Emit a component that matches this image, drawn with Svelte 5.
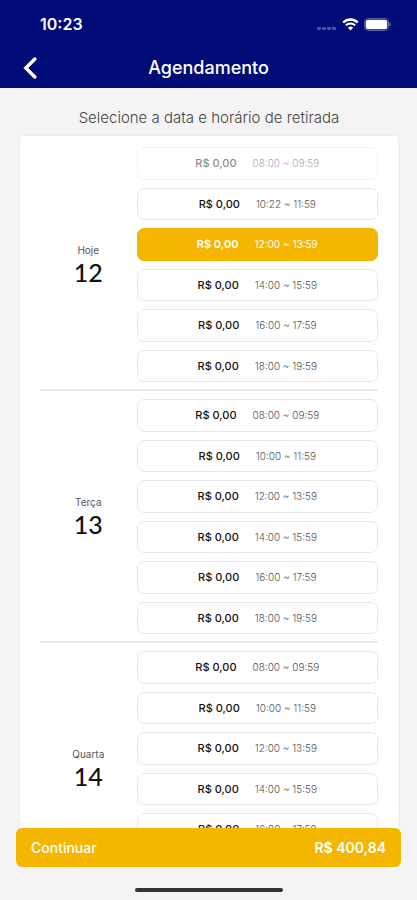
<script lang="ts">
	type Slot = { id: string; price: string; time: string; disabled?: boolean };
	type Day = { label: string; date: string; slots: Slot[] };

	const buildSlots = (date: string, times: string[]): Slot[] =>
		times.map((time) => ({ id: `${date}-${time}`, price: 'R$ 0,00', time }));

	const times = [
		'08:00 ~ 09:59',
		'10:00 ~ 11:59',
		'12:00 ~ 13:59',
		'14:00 ~ 15:59',
		'16:00 ~ 17:59',
		'18:00 ~ 19:59'
	];

	const today = buildSlots('12', [times[0], '10:22 ~ 11:59', ...times.slice(2)]);
	today[0].disabled = true;

	const days: Day[] = [
		{ label: 'Hoje', date: '12', slots: today },
		{ label: 'Terça', date: '13', slots: buildSlots('13', times) },
		{ label: 'Quarta', date: '14', slots: buildSlots('14', times.slice(0, 5)) }
	];

	let selected = $state(today[2].id);
</script>

<div class="screen">
	<header>
		<div class="status">
			<span class="clock">10:23</span>
			<div class="indicators">
				<svg width="20" height="13" viewBox="0 0 20 13" fill="#fff" fill-opacity="0.3" aria-hidden="true">
					<rect x="0" y="9" width="4" height="3" rx="1" />
					<rect x="5" y="9" width="4" height="3" rx="1" />
					<rect x="10" y="9" width="4" height="3" rx="1" />
					<rect x="15" y="9" width="4" height="3" rx="1" />
				</svg>
				<svg width="17" height="13" viewBox="0 0 17 13" fill="none" stroke="#fff" aria-hidden="true">
					<path d="M1.2 4.5a10.4 10.4 0 0 1 14.6 0" stroke-width="2.4" />
					<path d="M3.9 7.3a6.6 6.6 0 0 1 9.2 0" stroke-width="2.1" />
					<path d="M8.5 12.4 5.9 9.7a3.8 3.8 0 0 1 5.2 0Z" fill="#fff" stroke="none" />
				</svg>
				<svg width="27" height="13" viewBox="0 0 27 13" aria-hidden="true">
					<rect x="0.5" y="0.5" width="24" height="12" rx="3.5" fill="none" stroke="#fff" stroke-opacity="0.35" />
					<rect x="1.7" y="1.7" width="21.6" height="9.6" rx="2.4" fill="#fff" />
					<path d="M25.4 4.5c1.6.6 1.6 3.4 0 4Z" fill="#fff" fill-opacity="0.5" />
				</svg>
			</div>
		</div>
		<div class="title-bar">
			<button type="button" class="back" aria-label="Voltar">
				<svg width="14" height="22" viewBox="0 0 14 22" fill="none" stroke="#fff" stroke-width="3.4" aria-hidden="true">
					<path d="M11.8 2 2.8 11l9 9" stroke-linecap="round" />
				</svg>
			</button>
			<h1>Agendamento</h1>
		</div>
	</header>

	<main>
		<p class="hint">Selecione a data e horário de retirada</p>
		<div class="card">
			{#each days as day}
				<section class="day">
					<div class="day-name">
						<span>{day.label}</span>
						<strong>{day.date}</strong>
					</div>
					<div class="slots">
						{#each day.slots as slot}
							<button
								type="button"
								class="slot"
								class:selected={selected === slot.id}
								disabled={slot.disabled}
								aria-pressed={selected === slot.id}
								onclick={() => (selected = slot.id)}
							>
								<span class="price">{slot.price}</span>
								<span class="time">{slot.time}</span>
							</button>
						{/each}
						{#if day.slots.length < times.length}
							<span></span>
						{/if}
					</div>
				</section>
			{/each}
		</div>
	</main>

	<footer>
		<button type="button" class="continue">
			<span>Continuar</span>
			<span class="total">R$ 400,84</span>
		</button>
		<div class="home-bar"></div>
	</footer>
</div>

<style>
	:global(body) {
		background: #f4f4f4;
	}

	button {
		margin: 0;
		border: 0;
		font-family: inherit;
		cursor: pointer;
	}

	.screen {
		display: flex;
		flex-direction: column;
		height: 100vh;
		color: #111;
		font-family: Inter, 'Open Sans', sans-serif;
	}

	header {
		flex: none;
		background: #000c78;
		color: #fff;
	}

	.status {
		display: flex;
		align-items: center;
		justify-content: space-between;
		height: 48px;
		padding: 0 26px 0 40px;
	}

	.clock {
		font-size: 16px;
		font-weight: 600;
	}

	.indicators {
		display: flex;
		align-items: center;
		gap: 5px;
	}

	.title-bar {
		display: grid;
		grid-template-columns: 44px 1fr 44px;
		align-items: center;
		height: 40px;
	}

	.back {
		display: flex;
		justify-content: flex-end;
		padding: 0 7px 0 0;
		background: none;
	}

	h1 {
		margin: 0;
		font-size: 18px;
		font-weight: 500;
		line-height: 22px;
		text-align: center;
	}

	main {
		flex: 1;
		min-height: 0;
		padding: 0 19px 0 20px;
		overflow-y: auto;
		scrollbar-width: none;
	}

	.hint {
		margin: 0;
		padding: 20px 0 8px;
		color: #444;
		font-size: 15px;
		font-weight: 300;
		line-height: 20px;
		text-align: center;
	}

	.card {
		padding: 3px 20px 0;
		border-radius: 4px;
		background: #fff;
		box-shadow: 0 0 4px rgba(0, 0, 0, 0.06);
	}

	.day {
		display: grid;
		grid-template-columns: 2fr 5fr;
		padding: 8px 0 7px;
		border-bottom: 2px solid #ececec;
	}

	.day-name {
		display: flex;
		flex-direction: column;
		align-items: center;
		justify-content: center;
		color: #555;
		font-size: 10px;
		line-height: 14px;
	}

	.day-name strong {
		color: #111;
		font-family: Lato, sans-serif;
		font-size: 25px;
		font-weight: 500;
		line-height: 30px;
	}

	.slots {
		display: grid;
		grid-auto-rows: 1fr;
		gap: 8px;
		min-height: 235px;
	}

	.slot {
		display: flex;
		align-items: center;
		justify-content: center;
		gap: 16px;
		padding: 0;
		border: 1px solid #e9e9e9;
		border-radius: 7px;
		background: #fff;
		color: #111;
		font-size: 11px;
	}

	.price {
		font-weight: 500;
	}

	.time {
		color: #555;
		font-size: 10px;
		font-weight: 300;
	}

	.slot:disabled {
		opacity: 0.5;
		cursor: default;
	}

	.selected {
		border-color: #f4b600;
		background: #f4b600;
		color: #fff;
	}

	.selected .price {
		font-weight: 600;
	}

	.selected .time {
		color: #fff;
		font-weight: 400;
	}

	footer {
		position: relative;
		flex: none;
		margin-top: -8px;
		padding: 0 16px 8px;
	}

	.continue {
		display: flex;
		align-items: center;
		justify-content: space-between;
		width: 100%;
		height: 39px;
		padding: 0 15px;
		border-radius: 6px;
		background: #f4b600;
		color: #fff;
		font-size: 14px;
		font-weight: 500;
	}

	.total {
		font-weight: 600;
	}

	.home-bar {
		width: 148px;
		height: 4px;
		margin: 21px auto 0;
		border-radius: 2px;
		background: #333;
	}
</style>
